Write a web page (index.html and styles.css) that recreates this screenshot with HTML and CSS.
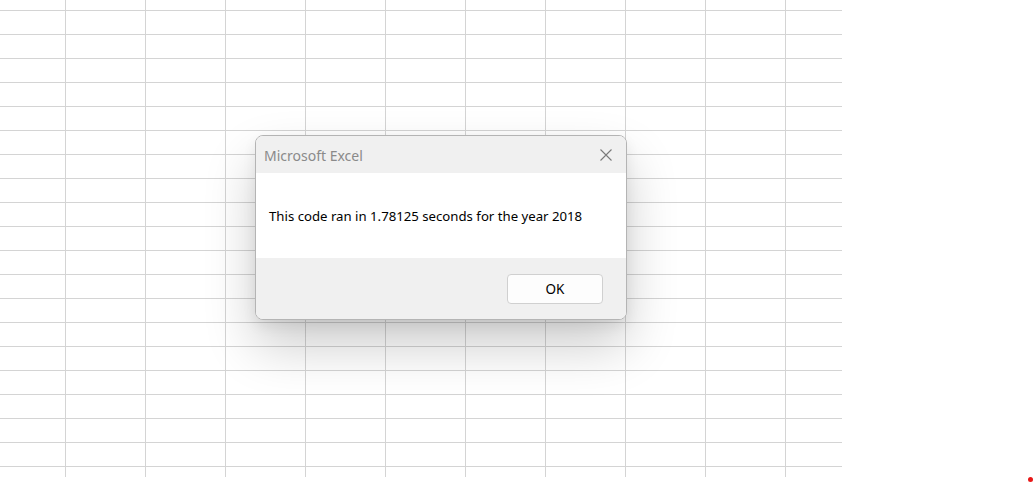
FILE: index.html
```html
<!DOCTYPE html>
<html>
<head>
<meta charset="utf-8">
<link rel="stylesheet" href="styles.css">
</head>
<body>
<div class="sheet"></div>
<div class="dialog">
  <div class="titlebar">
    <span class="title">Microsoft Excel</span>
    <svg class="close" width="12" height="12" viewBox="0 0 12 12"><path d="M0.5 0.5L11.5 11.5M11.5 0.5L0.5 11.5" stroke="#7a7a7a" stroke-width="1.1" fill="none"/></svg>
  </div>
  <div class="content">This code ran in 1.78125 seconds for the year 2018</div>
  <div class="footer"><button class="ok">OK</button></div>
</div>
<div class="dot"></div>
</body>
</html>
```
FILE: styles.css
```css
html, body { margin: 0; padding: 0; background: #fff; }
body { width: 1034px; height: 484px; overflow: hidden; position: relative; font-family: "Noto Sans", "Open Sans", sans-serif; }
.sheet {
  width: 842px; height: 477px;
  background-image:
    linear-gradient(to right, #d4d4d4 0, #d4d4d4 1px, transparent 1px),
    linear-gradient(to bottom, #d4d4d4 0, #d4d4d4 1px, transparent 1px);
  background-size: 80px 100%, 100% 24px;
  background-position: 65px 0, 0 10px;
}
.dialog {
  position: absolute; left: 255px; top: 135px;
  width: 370px; height: 183px;
  border: 1px solid #b4b4b4; border-radius: 8px;
  background: #fff; overflow: hidden;
  display: flex; flex-direction: column;
  box-shadow: 0 26px 52px rgba(0,0,0,0.2), 0 6px 14px rgba(0,0,0,0.07);
}
.titlebar {
  height: 37px; flex: none; background: #f0f0f0;
  display: flex; align-items: center; justify-content: space-between;
  padding: 0 14px 0 8px;
}
.title { color: #8a8a8a; font-size: 14px; position: relative; top: 1px; }
.close { display: block; margin-top: 1px; }
.content {
  height: 85px; flex: none; background: #fff;
  padding: 34px 0 0 13px; box-sizing: border-box;
  font-size: 13.2px; color: #000;
}
.footer {
  flex: 1; background: #f0f0f0;
  display: flex; justify-content: flex-end; align-items: flex-start;
  padding: 16px 23px 0 0;
}
.ok {
  width: 96px; height: 30px; box-sizing: border-box;
  border: 1px solid #d0d0d0; border-radius: 4px; background: #fdfdfd;
  font-family: inherit; font-size: 13.5px; color: #000; padding: 0;
}
.dot { position: absolute; left: 1028px; top: 477px; width: 5px; height: 5px; border-radius: 50%; background: #e81818; }
```
